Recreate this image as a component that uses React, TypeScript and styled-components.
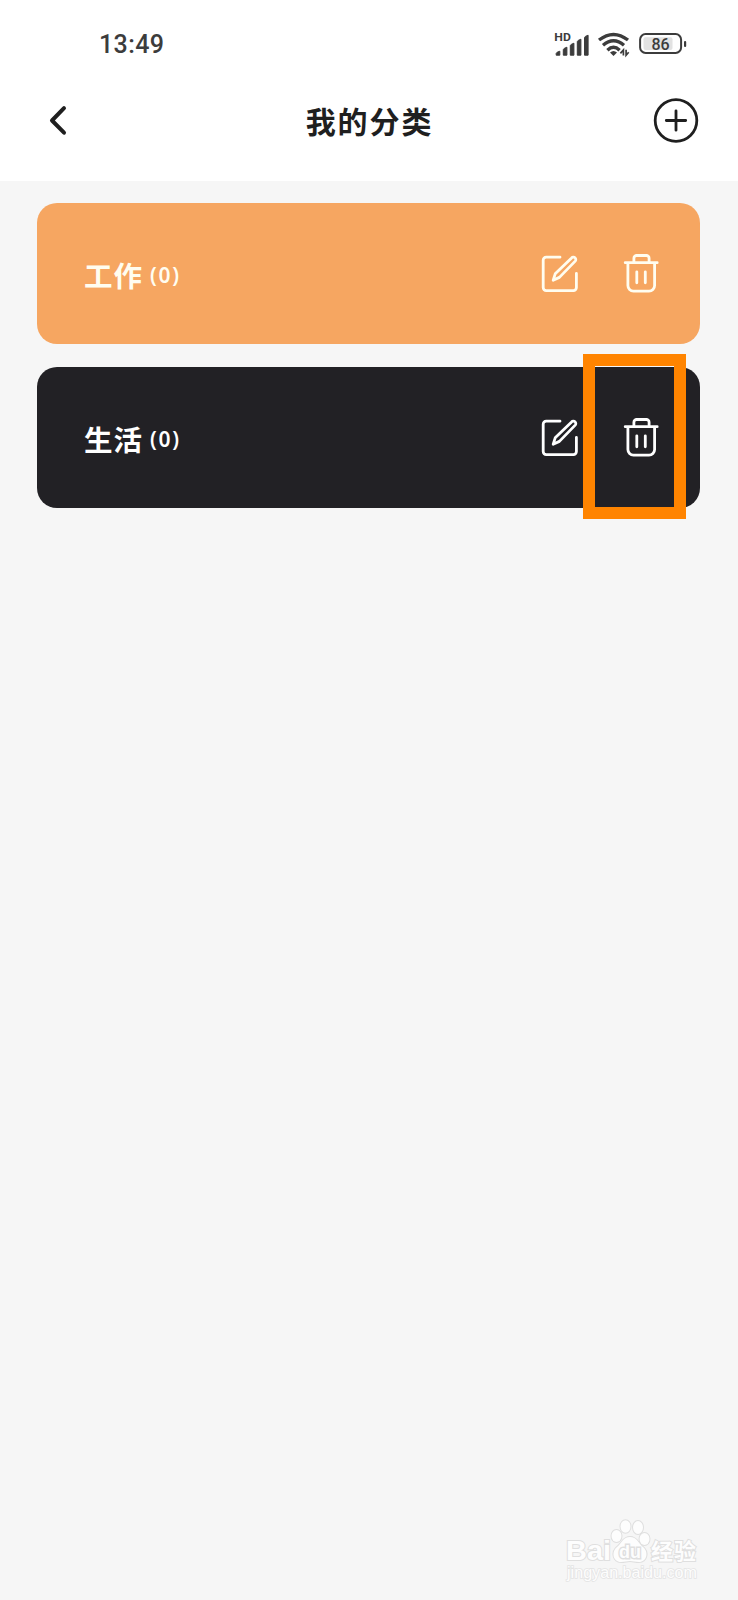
import React from "react";
import styled, { createGlobalStyle } from "styled-components";

const GlobalStyle = createGlobalStyle`
  * { box-sizing: border-box; }
  body { margin: 0; background: #f6f6f6; }
  svg { display: block; flex: none; overflow: visible; }
`;

const Screen = styled.div`
  position: relative;
  width: 738px;
  height: 1600px;
  overflow: hidden;
  background: #f6f6f6;
  color: #1f1f1f;
  font-family: "Noto Sans CJK SC", sans-serif;
`;

const TopArea = styled.header`
  height: 181px;
  background: #fff;
`;

const StatusBar = styled.div`
  display: flex;
  align-items: center;
  justify-content: space-between;
  height: 88px;
  padding: 0 51px 0 99px;
`;

const Clock = styled.time`
  padding-top: 2px;
  font: 500 25px/30px Roboto, sans-serif;
  letter-spacing: 0.4px;
  color: #3c3c3c;
`;

const StatusIcons = styled.div`
  display: flex;
  align-items: center;
  gap: 8px;
`;

const NavBar = styled.nav`
  display: flex;
  align-items: center;
  justify-content: space-between;
  height: 65px;
  padding: 0 39px 0 46px;
`;

const IconButton = styled.button<{ $size: number }>`
  display: flex;
  width: ${(p) => p.$size}px;
  height: ${(p) => p.$size}px;
  padding: 0;
  border: 0;
  background: none;
  color: inherit;
`;

const Title = styled.h1`
  margin: 0 4px 2px 0;
  font-size: 30px;
  line-height: 44px;
  font-weight: 700;
  letter-spacing: 1.9px;
`;

const CategoryList = styled.main`
  display: flex;
  flex-direction: column;
  gap: 23px;
  padding: 22px 38px 22px 37px;
`;

const Card = styled.section<{ $color: string; $ink: string }>`
  position: relative;
  display: flex;
  align-items: center;
  height: 141px;
  padding: 0 38px 0 47px;
  border-radius: 20px;
  background: ${(p) => p.$color};
  color: ${(p) => p.$ink};
`;

const CardLabel = styled.div`
  display: flex;
  align-items: center;
  flex: 1;
  padding-top: 2px;
`;

const CardName = styled.span`
  font-size: 28.5px;
  line-height: 42px;
  font-weight: 700;
  letter-spacing: 1px;
`;

const CardCount = styled.span`
  margin-left: 7px;
  font-family: "Noto Sans", sans-serif;
  font-size: 21px;
  line-height: 30px;
  font-weight: 600;
  letter-spacing: 1.7px;
`;

const Actions = styled.div`
  display: flex;
  gap: 42px;
`;

const Highlight = styled.div`
  position: absolute;
  top: -13px;
  right: 14px;
  width: 103px;
  height: 165px;
  border: 12px solid #ff8400;
`;

const Watermark = styled.div`
  position: absolute;
  left: 560px;
  top: 1515px;
`;

const StatusSignal = () => (
  <svg width="36" height="24" viewBox="0 0 36 24" fill="#3c3c3c">
    <text x="0.3" y="9.4" fontFamily="Roboto" fontWeight="700" fontSize="11.5" textLength="16.5" lengthAdjust="spacingAndGlyphs">HD</text>
    <path
      stroke="#3c3c3c"
      strokeWidth="1"
      strokeLinejoin="round"
      d="M2.2 23.2v-1.8q0-1.2 3.6-2.2v4ZM9.3 23.2v-5.6q0-1.2 3.6-2.4v8ZM16.3 23.2V13.6q0-1.2 3.6-2.4v12ZM23.3 23.2V9.6q0-1.2 3.6-2.4v16ZM30.5 23.2V5.6q0-1.2 3.6-2.4v20Z"
    />
  </svg>
);

const StatusWifi = () => (
  <svg width="32" height="24" viewBox="0 0 32 24" fill="none" stroke="#3c3c3c" strokeWidth="3.4">
    <path d="M1 8Q15.5-3.2 30 8" />
    <path d="M5 13.2Q15.5 4.4 26 13.2" />
    <path d="M9.4 18.2Q15.5 12.4 21.6 18.2" />
    <path d="M12 20.4Q15.5 17.4 19 20.4L15.5 24Z" fill="#3c3c3c" stroke="none" />
    <path d="M25.4 23.5V18l-3 3.4M28.1 17.8v5.4l2.6-3" strokeWidth="1.7" />
  </svg>
);

const StatusBattery = () => (
  <svg width="49" height="22" viewBox="0 0 49 22">
    <rect x="2.1" y="1.1" width="41" height="18.8" rx="5.5" fill="#fff" stroke="#3c3c3c" strokeWidth="2" />
    <rect x="5.5" y="4.2" width="29" height="12.8" rx="2" fill="#e2e2e2" />
    <rect x="46" y="8" width="2.2" height="6" rx="1" fill="#3c3c3c" />
    <text x="22.6" y="16.6" textAnchor="middle" fontFamily="Roboto" fontWeight="500" fontSize="16" fill="#3c3c3c">86</text>
  </svg>
);

const BackIcon = () => (
  <svg width="44" height="44" viewBox="0 0 44 44" fill="none" stroke="currentColor" strokeWidth="4" strokeLinecap="round" strokeLinejoin="round">
    <path d="M18 9.2 6 21.5l12 12.2" />
  </svg>
);

const AddIcon = () => (
  <svg width="46" height="46" viewBox="0 0 46 46" fill="none" stroke="currentColor" strokeWidth="2.8" strokeLinecap="round">
    <circle cx="23" cy="22.5" r="20.8" />
    <path d="M23 12.8v19.4M13.3 22.5h19.4" />
  </svg>
);

const EditIcon = () => (
  <svg width="40" height="40" viewBox="0 0 40 40" fill="none" stroke="currentColor" strokeWidth="2.8" strokeLinecap="round" strokeLinejoin="round">
    <path d="M20 3.2H6.2a3 3 0 0 0-3 3v27.4a3 3 0 0 0 3 3h27.2a3 3 0 0 0 3-3V19.4" />
    <path d="M13.2 26.2l2-6.4L31.6 3.9a2.3 2.3 0 0 1 3.6 3.2L19.4 23.4Z" />
  </svg>
);

const TrashIcon = () => (
  <svg width="40" height="40" viewBox="0 0 40 40" fill="none" stroke="currentColor" strokeWidth="2.8" strokeLinecap="round" strokeLinejoin="round">
    <path d="M3.2 8.7h32M11.9 8.6V4.3a2.8 2.8 0 0 1 2.8-2.8h9.6a2.8 2.8 0 0 1 2.8 2.8v4.3M5.9 8.8v22.7a5.6 5.6 0 0 0 5.6 5.6h15.5a5.6 5.6 0 0 0 5.6-5.6V8.8" />
    <path d="M14.8 17.8v11M23.3 17.8v11" />
  </svg>
);

const BrandMark = () => (
  <svg width="148" height="70" viewBox="0 0 148 70" fill="#fdfdfd" stroke="#dfdfdf" paintOrder="stroke">
    <text x="6" y="45" fontFamily="Liberation Sans" fontWeight="700" fontSize="28" textLength="45" lengthAdjust="spacingAndGlyphs" strokeWidth="2">Bai</text>
    <g strokeWidth="2">
      <ellipse cx="56.5" cy="21" rx="5" ry="6" />
      <ellipse cx="65.5" cy="11.5" rx="5" ry="6.2" />
      <ellipse cx="78" cy="12.5" rx="5" ry="6.4" />
      <ellipse cx="84.5" cy="24" rx="5" ry="6" />
      <path d="M70 22c-7 0-8 6-13 10-6 5-4 15 4 15 4 0 6-1 9-1s5 1 9 1c8 0 10-10 4-15-5-4-6-10-13-10Z" />
    </g>
    <text x="59" y="43" fontFamily="Liberation Sans" fontWeight="700" fontSize="19" textLength="22" lengthAdjust="spacingAndGlyphs" strokeWidth="3">du</text>
    <text x="91" y="43.5" fontFamily="Noto Sans CJK SC" fontWeight="700" fontSize="22" textLength="45" strokeWidth="2">经验</text>
    <text x="7" y="63" fontFamily="Liberation Sans" fontSize="16" textLength="130" lengthAdjust="spacingAndGlyphs" stroke="#e4e4e4" strokeWidth="1.6">jingyan.baidu.com</text>
  </svg>
);

const categories = [
  { name: "工作", color: "#f6a661", ink: "#fffdf0", marked: false },
  { name: "生活", color: "#222125", ink: "#ffffff", marked: true },
];

export default function App() {
  return (
    <Screen>
      <GlobalStyle />
      <TopArea>
        <StatusBar>
          <Clock>13:49</Clock>
          <StatusIcons>
            <StatusSignal />
            <StatusWifi />
            <StatusBattery />
          </StatusIcons>
        </StatusBar>
        <NavBar>
          <IconButton $size={44} aria-label="返回"><BackIcon /></IconButton>
          <Title>我的分类</Title>
          <IconButton $size={46} aria-label="添加"><AddIcon /></IconButton>
        </NavBar>
      </TopArea>
      <CategoryList>
        {categories.map((c) => (
          <Card key={c.name} $color={c.color} $ink={c.ink}>
            <CardLabel>
              <CardName>{c.name}</CardName>
              <CardCount>(0)</CardCount>
            </CardLabel>
            <Actions>
              <IconButton $size={40} aria-label="编辑"><EditIcon /></IconButton>
              <IconButton $size={40} aria-label="删除"><TrashIcon /></IconButton>
            </Actions>
            {c.marked && <Highlight />}
          </Card>
        ))}
      </CategoryList>
      <Watermark><BrandMark /></Watermark>
    </Screen>
  );
}
